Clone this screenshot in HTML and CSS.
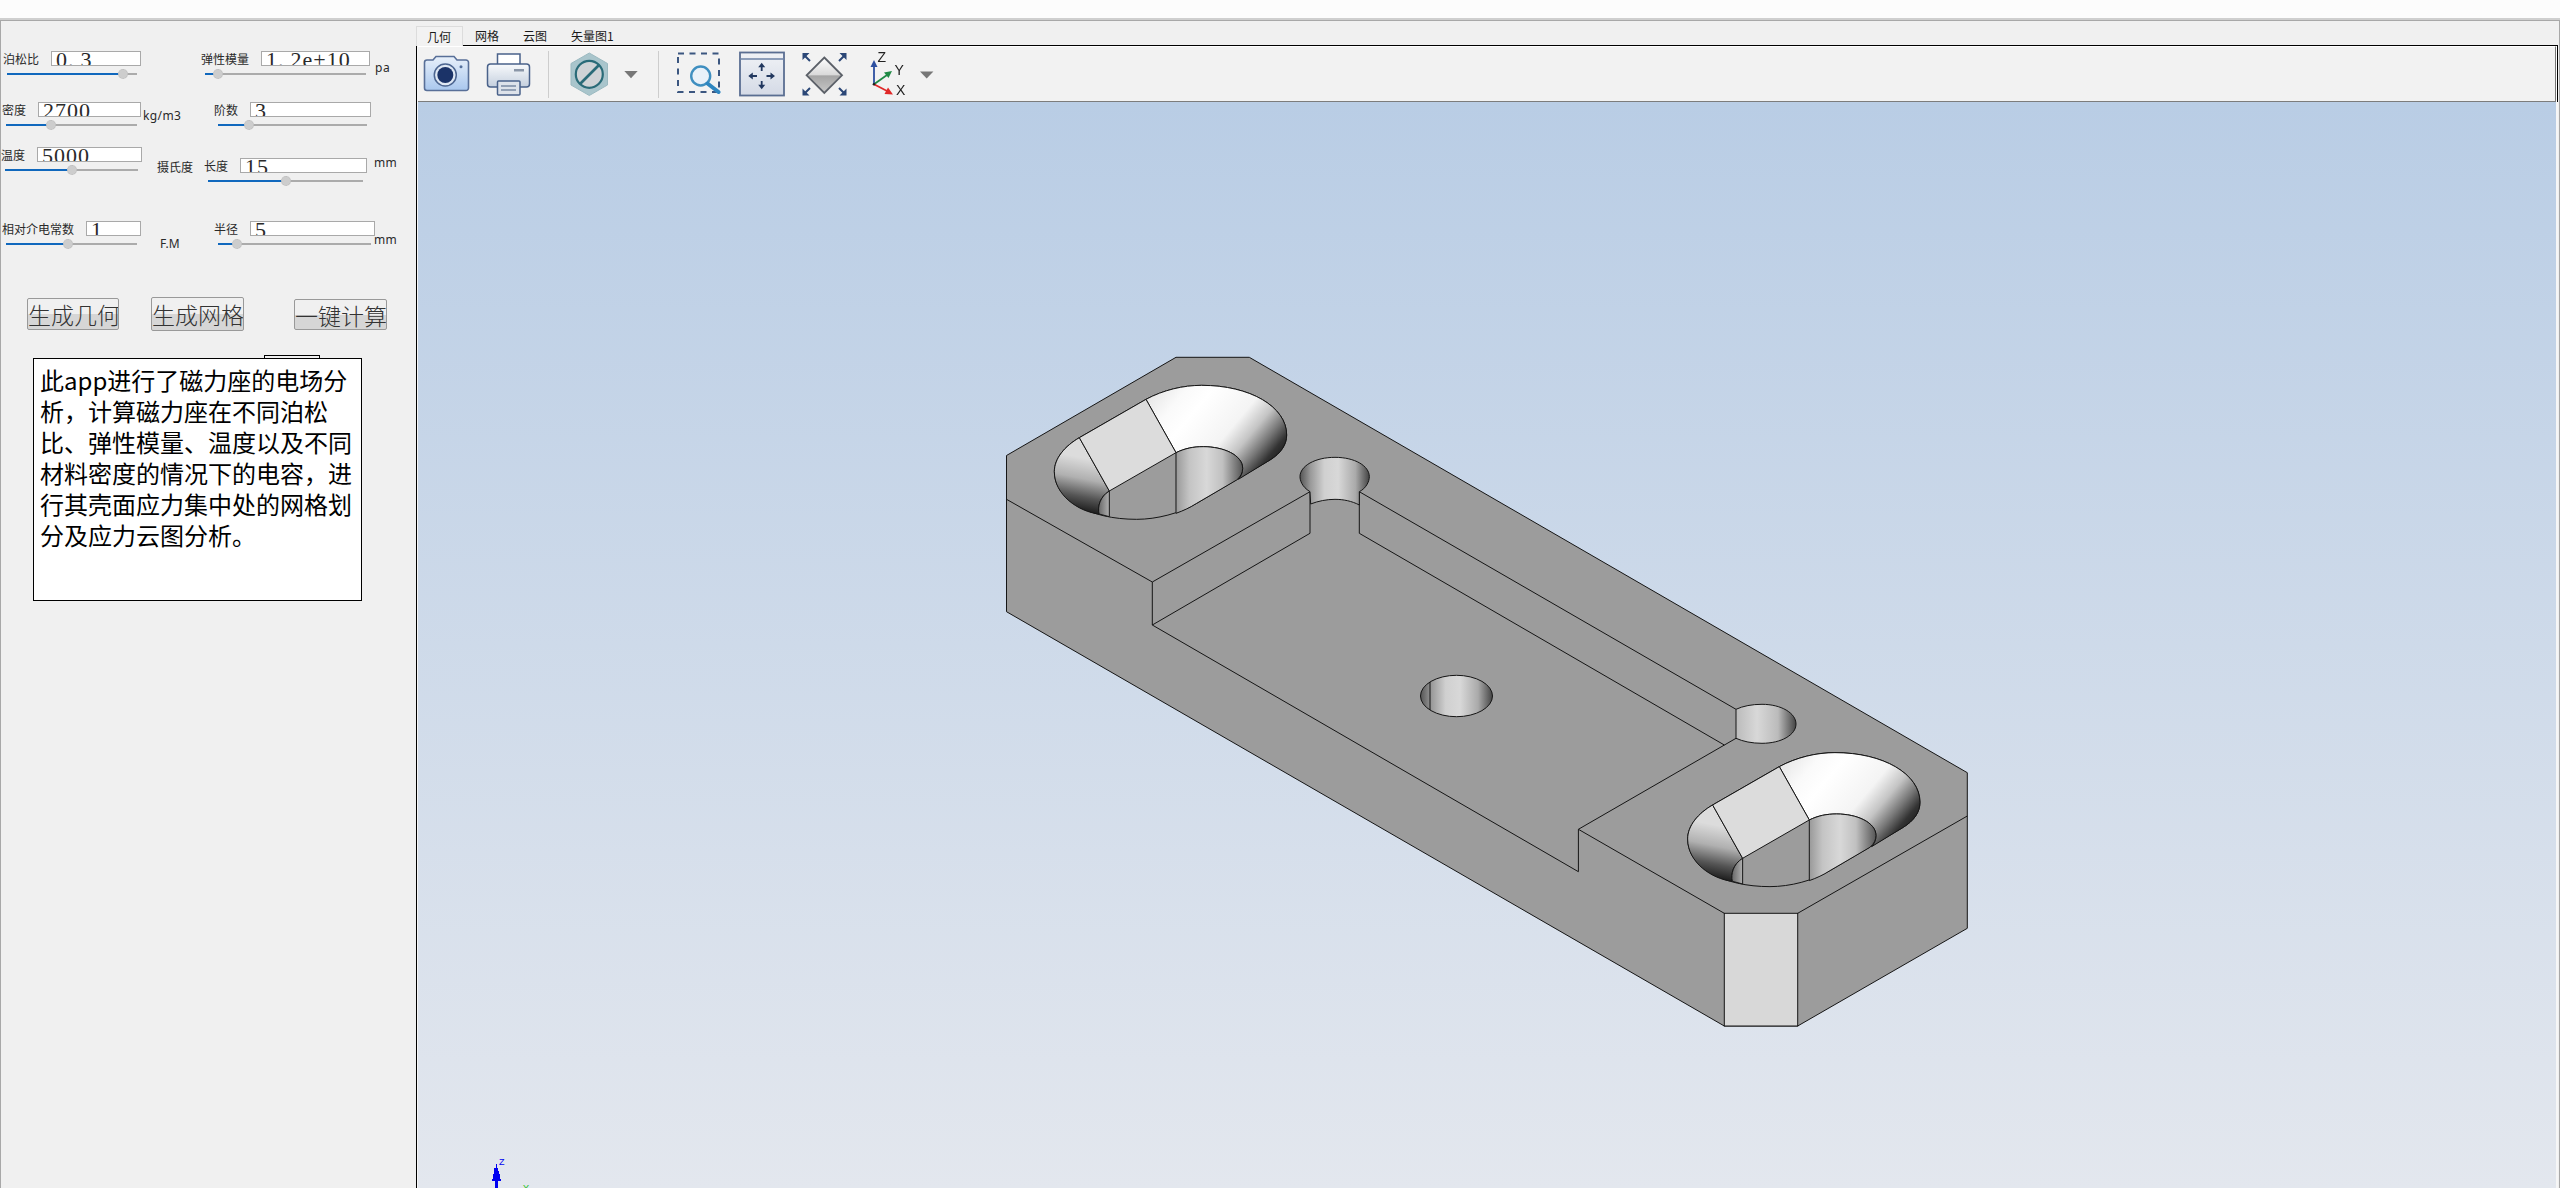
FILE: index.html
```html
<!DOCTYPE html>
<html lang="zh">
<head>
<meta charset="utf-8">
<title>磁力座电场分析</title>
<link rel="stylesheet" href="styles.css">
</head>
<body>
<header class="topbar"></header>
<main class="main">
  <aside class="panel">
    <section class="form">
      <div class="cell">
        <div class="field f1">
          <div class="top"><span class="lab">泊松比</span><span class="inp">0<span class="dot">.</span>3</span></div>
          <div class="slider"><i class="fill" style="width:89%"></i><b class="thumb" style="left:89%"></b></div>
        </div>
      </div>
      <div class="cell">
        <div class="field f2">
          <div class="top"><span class="lab">弹性模量</span><span class="inp">1<span class="dot">.</span>2e+10</span></div>
          <div class="slider"><i class="fill" style="width:8%"></i><b class="thumb" style="left:8%"></b></div>
        </div>
        <span class="unit u2">pa</span>
      </div>
      <div class="cell">
        <div class="field f3">
          <div class="top"><span class="lab">密度</span><span class="inp">2700</span></div>
          <div class="slider"><i class="fill" style="width:34.4%"></i><b class="thumb" style="left:34.4%"></b></div>
        </div>
        <span class="unit u3">kg/m3</span>
      </div>
      <div class="cell">
        <div class="field f4">
          <div class="top"><span class="lab">阶数</span><span class="inp">3</span></div>
          <div class="slider"><i class="fill" style="width:20.8%"></i><b class="thumb" style="left:20.8%"></b></div>
        </div>
      </div>
      <div class="cell">
        <div class="field f5">
          <div class="top"><span class="lab">温度</span><span class="inp">5000</span></div>
          <div class="slider"><i class="fill" style="width:50.4%"></i><b class="thumb" style="left:50.4%"></b></div>
        </div>
        <span class="unit u5">摄氏度</span>
      </div>
      <div class="cell">
        <div class="field f6">
          <div class="top"><span class="lab">长度</span><span class="inp">15</span></div>
          <div class="slider"><i class="fill" style="width:50.3%"></i><b class="thumb" style="left:50.3%"></b></div>
        </div>
        <span class="unit u6">mm</span>
      </div>
      <div class="cell">
        <div class="field f7">
          <div class="top"><span class="lab">相对介电常数</span><span class="inp">1</span></div>
          <div class="slider"><i class="fill" style="width:47.3%"></i><b class="thumb" style="left:47.3%"></b></div>
        </div>
        <span class="unit u7">F.M</span>
      </div>
      <div class="cell">
        <div class="field f8">
          <div class="top"><span class="lab">半径</span><span class="inp">5</span></div>
          <div class="slider"><i class="fill" style="width:12.4%"></i><b class="thumb" style="left:12.4%"></b></div>
        </div>
        <span class="unit u8">mm</span>
      </div>
    </section>
    <section class="actions">
      <button class="btn b1">生成几何</button>
      <button class="btn b2">生成网格</button>
      <button class="btn b3">一键计算</button>
    </section>
    <div class="note-tab"></div>
    <div class="note">此app进行了磁力座的电场分<br>析，计算磁力座在不同泊松<br>比、弹性模量、温度以及不同<br>材料密度的情况下的电容，进<br>行其壳面应力集中处的网格划<br>分及应力云图分析。</div>
  </aside>

  <section class="viewer">
    <nav class="tabs">
      <span class="tab active">几何</span>
      <span class="tab">网格</span>
      <span class="tab">云图</span>
      <span class="tab">矢量图1</span>
    </nav>
    <div class="stage">
      <div class="bar-wrap">
        <div class="toolbar">
          <svg class="icon i-cam" width="56" height="52" viewBox="420 48 56 52">
            <defs><linearGradient id="camG" x1="0" y1="0" x2="0" y2="1"><stop offset="0" stop-color="#e8f0fa"/><stop offset="1" stop-color="#a9c7ee"/></linearGradient></defs>
            <path d="M427 60h6l3-3.5h18l3 3.5h9a2.5 2.5 0 0 1 2.5 2.5v25.5a2.5 2.5 0 0 1-2.5 2.5h-39a2.5 2.5 0 0 1-2.5-2.5v-25.500a2.500 2.500 0 0 1 2.500-2.500z" fill="url(#camG)" stroke="#586f98" stroke-width="1.6"/>
            <circle cx="445.300" cy="75" r="11" fill="#dfe8f4" stroke="#4c6590" stroke-width="1.500"/>
            <circle cx="445.300" cy="75" r="8" fill="#1b3368"/>
            <circle cx="461" cy="66.700" r="1.500" fill="#55709c"/>
          </svg>
          <svg class="icon i-print" width="60" height="52" viewBox="476 48 60 52">
            <defs><linearGradient id="prG" x1="0" y1="0" x2="0" y2="1"><stop offset="0" stop-color="#f8fafc"/><stop offset="1" stop-color="#c4cfde"/></linearGradient></defs>
            <rect x="497.500" y="54" width="22.500" height="14" fill="#fff" stroke="#4a628a" stroke-width="1.500"/>
            <rect x="487.500" y="64" width="42" height="23" rx="3" fill="url(#prG)" stroke="#4a628a" stroke-width="1.500"/>
            <rect x="514" y="69" width="10" height="2.500" fill="#8a96a8"/>
            <rect x="497.500" y="81" width="22.500" height="14" rx="1" fill="#dde2ea" stroke="#4a628a" stroke-width="1.500"/>
            <path d="M501 86h15M501 90h15" stroke="#7a8aa4" stroke-width="1.400"/>
          </svg>
          <span class="sep s1"></span>
          <svg class="icon i-hex" width="50" height="52" viewBox="565 48 50 52">
            <polygon points="589.300,53 607.500,63.500 607.500,85 589.300,95.500 571,85 571,63.500" fill="#a9c5cc" stroke="#9bb9c0"/>
            <circle cx="589.300" cy="74.300" r="13.500" fill="#cfd3d6" stroke="#2a6b78" stroke-width="2.200"/>
            <path d="M580 84L599 65" stroke="#2a6b78" stroke-width="2.600"/>
          </svg>
          <svg class="icon" width="30" height="52" viewBox="615 48 30 52"><polygon points="624.300,71 637.700,71 631,78.300" fill="#777"/></svg>
          <span class="sep s2"></span>
          <svg class="icon i-zoom" width="60" height="52" viewBox="670 48 60 52">
            <rect x="678" y="53.500" width="41" height="38.500" fill="none" stroke="#3b5680" stroke-width="2" stroke-dasharray="6 5.500"/>
            <circle cx="700.700" cy="76" r="9.500" fill="#e9f1f9" stroke="#3f8fc0" stroke-width="2.400"/>
            <path d="M707.500 83.500L718.500 92" stroke="#2e86c0" stroke-width="4" stroke-linecap="round"/>
          </svg>
          <svg class="icon i-pan" width="60" height="52" viewBox="730 48 60 52">
            <defs><linearGradient id="panG" x1="0" y1="0" x2="0" y2="1"><stop offset="0" stop-color="#f0f2f6"/><stop offset="1" stop-color="#d4dae6"/></linearGradient></defs>
            <rect x="740" y="52.500" width="44" height="43" fill="url(#panG)" stroke="#5a6e92" stroke-width="1.800"/>
            <path d="M740 59h44" stroke="#6d82a6" stroke-width="1.600"/>
            <path d="M761.700 65v6M761.700 81v6M751 76h6M766.500 76h6" stroke="#22385f" stroke-width="1.800"/>
            <path d="M761.700 62.700l3.500 4.500h-7zM761.700 89.300l3.500-4.500h-7zM748.300 76l4.500-3.500v7zM775 76l-4.500-3.500v7z" fill="#22385f"/>
          </svg>
          <svg class="icon i-fit" width="70" height="52" viewBox="790 48 70 52">
            <defs>
              <linearGradient id="fitT" x1="0" y1="0" x2="0" y2="1"><stop offset="0" stop-color="#fff"/><stop offset="1" stop-color="#d8d8d8"/></linearGradient>
              <linearGradient id="fitB" x1="0" y1="0" x2="0" y2="1"><stop offset="0" stop-color="#a4a4a4"/><stop offset="1" stop-color="#c8c8c8"/></linearGradient>
            </defs>
            <polygon points="824.300,57.500 842,75.300 806.600,75.300" fill="url(#fitT)"/>
            <polygon points="806.600,75.300 842,75.300 824.300,93" fill="url(#fitB)"/>
            <polygon points="824.300,57.500 842,75.300 824.300,93 806.600,75.300" fill="none" stroke="#5b6068" stroke-width="1.800"/>
            <path d="M804 55l6 6M845 55l-6 6M804 94l6-6M845 94l-6-6" stroke="#2b4777" stroke-width="2"/>
            <path d="M802.500 53h7l-7 7zM846.500 53h-7l7 7zM802.500 95.500h7l-7-7zM846.500 95.500h-7l7-7z" fill="#2b4777"/>
          </svg>
          <svg class="icon i-axis" width="55" height="52" viewBox="860 48 55 52">
            <path d="M874 84.300V66" stroke="#2c4fa0" stroke-width="1.800"/>
            <polygon points="874,60 877.500,67 870.500,67" fill="#2c4fa0"/>
            <path d="M874 84.300L887 75" stroke="#1f8a45" stroke-width="1.800"/>
            <polygon points="892,71 888.500,78 884,72.500" fill="#1f8a45"/>
            <path d="M874 84.300L888 91.500" stroke="#e02828" stroke-width="1.800"/>
            <polygon points="893,94.500 884.500,94 888,87.500" fill="#e02828"/>
            <circle cx="874" cy="84.300" r="1.300" fill="#222"/>
            <text class="axis-t" x="877.500" y="62">Z</text>
            <text class="axis-t" x="894.500" y="74.500">Y</text>
            <text class="axis-t" x="896" y="94.500">X</text>
          </svg>
          <svg class="icon" width="25" height="52" viewBox="915 48 25 52"><polygon points="920,71.500 933.400,71.500 926.700,78.500" fill="#777"/></svg>
        </div>
      </div>
      <div class="canvas">
        <svg class="model" width="2138" height="1086" viewBox="418 102 2138 1086">
          <defs>
            <linearGradient id="coneR" gradientUnits="userSpaceOnUse" x1="470" y1="130" x2="830" y2="430">
              <stop offset="0" stop-color="#e0e0e0"/><stop offset=".22" stop-color="#fafafa"/><stop offset=".35" stop-color="#fff"/><stop offset=".6" stop-color="#f4f4f4"/><stop offset=".72" stop-color="#c4c4c4"/><stop offset=".82" stop-color="#777"/><stop offset=".9" stop-color="#333"/><stop offset="1" stop-color="#111"/>
            </linearGradient>
            <linearGradient id="coneL" gradientUnits="userSpaceOnUse" x1="310" y1="360" x2="280" y2="510">
              <stop offset="0" stop-color="#dcdcdc"/><stop offset=".4" stop-color="#b0b0b0"/><stop offset=".75" stop-color="#555"/><stop offset="1" stop-color="#222"/>
            </linearGradient>
            <linearGradient id="cylR" gradientUnits="userSpaceOnUse" x1="558" y1="0" x2="758" y2="0">
              <stop offset="0" stop-color="#999"/><stop offset=".2" stop-color="#c4c4c4"/><stop offset=".46" stop-color="#d8d8d8"/><stop offset=".7" stop-color="#c0c0c0"/><stop offset="1" stop-color="#555"/>
            </linearGradient>
            <linearGradient id="cylL" gradientUnits="userSpaceOnUse" x1="325" y1="0" x2="358" y2="0">
              <stop offset="0" stop-color="#666"/><stop offset="1" stop-color="#b0b0b0"/>
            </linearGradient>
            <linearGradient id="hole">
              <stop offset="0" stop-color="#555"/><stop offset=".15" stop-color="#999"/><stop offset=".35" stop-color="#d0d0d0"/><stop offset=".55" stop-color="#d8d8d8"/><stop offset=".8" stop-color="#aaa"/><stop offset="1" stop-color="#444"/>
            </linearGradient>
            <linearGradient id="hole2">
              <stop offset="0" stop-color="#bbb"/><stop offset=".35" stop-color="#d8d8d8"/><stop offset=".7" stop-color="#bbb"/><stop offset="1" stop-color="#444"/>
            </linearGradient>
          </defs>
          <polygon class="solid" points="1006.500,455.500 1176,357.300 1249.300,357.300 1967.300,772.700 1967.300,928.300 1797.700,1026 1724.300,1026 1006.500,611.700"/>
          <rect class="ln" fill="#d8d8d8" x="1724.300" y="913.300" width="73.400" height="112.700"/>
          <path class="ln" fill="none" d="M1006.500 499.300L1152.300 582L1310 491.700V533.300L1152.300 625V582M1152.300 625L1578.400 871.700V829.300L1736 738.300M1578.400 829.300L1724.300 913.300M1359.300 491.700L1736 709.300M1359.300 491.700V533.300L1724.300 745M1967.300 816L1797.700 913.300"/>
          <g id="slot" class="zc" transform="translate(990 340) scale(.33333)">
            <path d="M268 293L468 178C520 150 580 136 635 136C780 136 890 200 890 285C890 315 872 340 840 360L620 490C570 520 500 538 440 538C300 538 193 480 193 395C193 355 225 318 268 293Z" fill="#9c9c9c"/>
            <path d="M468 178C520 150 580 136 635 136C780 136 890 200 890 285C890 315 872 340 840 360L745 418C754 408 758 398 758 385C758 345 700 320 640 320C610 320 585 325 558 338Z" fill="url(#coneR)"/>
            <path d="M268 293C225 318 193 355 193 395C193 465 265 515 327 522C322 500 330 470 358 453Z" fill="url(#coneL)"/>
            <path d="M268 293L468 178L558 338L358 453Z" fill="#dcdcdc"/>
            <path d="M558 338C585 325 610 320 640 320C700 320 758 345 758 385C758 398 752 410 740 420L620 490C600 503 580 512 558 520Z" fill="url(#cylR)"/>
            <path d="M358 453C330 470 322 500 327 522L358 530Z" fill="url(#cylL)"/>
          </g>
          <use href="#slot" transform="translate(633.300 367.300)"/>
          <g class="zc" transform="translate(990 340) scale(.33333)">
            <path d="M960 455C935 440 930 420 930 410C930 378 975 352 1035 352C1095 352 1138 378 1138 410C1138 425 1128 445 1108 455V495C1085 483 1060 478 1035 478C1010 478 985 483 962 492Z" fill="url(#hole)"/>
          </g>
          <ellipse class="ln" cx="1456.500" cy="696" rx="36" ry="20.700" fill="url(#hole)"/>
          <path class="ln" fill="none" d="M1430 682V710"/>
          <path class="ln" d="M1736 709.300C1743 706 1752 704.300 1762 704.300C1781 704.300 1796 713 1796 724C1796 735 1781 743.300 1762 743.300C1752 743.300 1743 741.500 1736 738.300Z" fill="url(#hole2)"/>
          <polygon class="triad-z" points="495.500,1164 497,1164 497,1168 498,1168 498,1171 499,1171 499,1174 500,1174 500,1179 501,1179 501,1181 498,1181 498,1188 495,1188 495,1181 492,1181 492,1179 493,1179 493,1174 494,1174 494,1168 495.500,1168"/>
          <text class="triad-t tz" x="499" y="1165">Z</text>
          <text class="triad-t ty" x="523" y="1191">Y</text>
        </svg>
      </div>
    </div>
  </section>
</main>
</body>
</html>
```
FILE: styles.css
```css
* { box-sizing: border-box; }
html, body { margin: 0; height: 1188px; overflow: hidden; }
body {
  background: #f0f0f0;
  font-family: "Noto Sans CJK SC", "Noto Sans", sans-serif;
  color: #222;
}
.topbar {
  height: 20px;
  background: #fcfcfc;
  border-bottom: 2px solid #cfcfcf;
}
.main {
  display: flex;
  height: 1168px;
  border: 1px solid #a8a8a8;
  border-width: 1px 1px 0 1px;
  background: #f0f0f0;
}

/* left form */
.panel { width: 415px; flex: none; }
.form {
  display: grid;
  grid-template-columns: 200px 1fr;
  grid-template-rows: 51px 45px 74px 76px;
  padding-top: 30px;
  height: 276px;
}
.cell { display: flex; align-self: start; }
.field { flex: none; }
.top { display: flex; gap: 12px; height: 15px; align-items: center; }
.lab { font-size: 12px; line-height: 15px; white-space: nowrap; color: #2a2a2a; }
.inp {
  flex: 1;
  height: 15px;
  background: #fff;
  border: 1px solid #a9a9a9;
  overflow: hidden;
  padding-left: 4px;
  font-family: "Liberation Serif", serif;
  font-size: 22px;
  line-height: 16px;
  letter-spacing: 1px;
  color: #2a2a2a;
  white-space: nowrap;
}
.dot { margin-right: 6px; }
.slider {
  position: relative;
  height: 2px;
  margin: 7px 4px 0;
  background: #ababab;
}
.fill { display: block; height: 2px; background: #1068bd; }
.thumb {
  position: absolute;
  top: -4px;
  width: 10px;
  height: 10px;
  margin-left: -5px;
  border-radius: 50%;
  background: #cdcdcd;
  border: 1px dotted #bbb;
}
.f1 { width: 138px; margin-left: 2px; }
.f2 { width: 169px; }
.f3 { width: 139px; margin-left: 1px; }
.f4 { width: 157px; margin-left: 13px; }
.f5 { width: 141px; }
.f6 { width: 163px; margin: 11px 0 0 3px; }
.f7 { width: 139px; margin-left: 1px; }
.f8 { width: 161px; margin-left: 13px; }
.unit {
  font-family: "Noto Sans", sans-serif;
  font-size: 12px;
  line-height: 14px;
  white-space: nowrap;
  color: #2a2a2a;
}
.u2 { margin: 10px 0 0 5px; letter-spacing: .5px; }
.u3 { margin: 7px 0 0 2px; letter-spacing: .4px; }
.u5 { margin: 13px 0 0 15px; font-family: "Noto Sans CJK SC", sans-serif; }
.u6 { margin: 9px 0 0 7px; letter-spacing: .4px; }
.u7 { margin: 16px 0 0 19px; }
.u8 { margin: 12px 0 0 -1px; letter-spacing: .4px; }

/* buttons */
.actions { display: flex; align-items: flex-start; height: 58px; }
.btn {
  display: block;
  padding: 0;
  overflow: hidden;
  white-space: nowrap;
  font-family: "Noto Sans CJK SC", sans-serif;
  font-weight: 300;
  font-size: 23px;
  line-height: 28px;
  color: #333;
  border: 1px solid #999;
  border-radius: 2px;
  background: linear-gradient(#f0f0f0 0 50%, #d6d6d6 50% 100%);
}
.b1 { width: 92px; height: 32px; margin: 1px 0 0 26px; }
.b2 { width: 93px; height: 34px; margin-left: 32px; }
.b3 { width: 93px; height: 31px; margin: 2px 0 0 50px; }

/* note */
.note-tab {
  width: 56px;
  height: 3px;
  margin-left: 263px;
  border: 1px solid #000;
  border-bottom: 0;
}
.note {
  width: 329px;
  height: 243px;
  margin-left: 32px;
  padding: 5px 0 0 6px;
  background: #fff;
  border: 1px solid #000;
  font-size: 24px;
  line-height: 31px;
  color: #000;
  white-space: nowrap;
}

/* viewer */
.viewer { flex: 1; display: flex; flex-direction: column; min-width: 0; }
.tabs { display: flex; align-items: flex-end; height: 24px; flex: none; }
.tab {
  padding: 0 12px;
  height: 19px;
  font-size: 12px;
  line-height: 20px;
  color: #1a1a1a;
  white-space: nowrap;
}
.tab.active {
  position: relative;
  z-index: 1;
  width: 47px;
  height: 20px;
  margin-bottom: -1px;
  padding: 0 0 0 10px;
  background: #f2f2f2;
  border: 1px solid #dcdcdc;
  border-bottom: 0;
}
.stage {
  flex: 1;
  min-height: 0;
  display: flex;
  flex-direction: column;
  border-top: 1px solid #000;
  border-left: 1px solid #000;
  padding-left: 1px;
  margin-right: 1px;
  background: #f6f6f6;
}
.bar-wrap {
  flex: none;
  border-right: 1px solid #000;
  padding-right: 1px;
  background: #fff;
}
.toolbar {
  display: flex;
  align-items: center;
  height: 56px;
  padding-left: 2px;
  background: #f2f2f2;
  border-top: 1px solid #fff;
  border-right: 1px solid #777;
  border-bottom: 1px solid #7c7c7c;
}
.icon { display: block; flex: none; filter: blur(.35px); }
.sep { flex: none; width: 1px; height: 47px; background: #cdcdcd; }
.s1 { margin: 0 16px 0 12px; }
.s2 { margin: 0 11px 0 13px; }
.axis-t { font-family: "Liberation Sans", sans-serif; font-size: 14px; fill: #222; }
.canvas {
  flex: 1;
  min-height: 0;
  margin-right: 2px;
  overflow: hidden;
  background: linear-gradient(#b9cde5, #e3e7ee);
}
.model { display: block; }
.solid { fill: #9c9c9c; stroke: #151515; stroke-width: 1; }
.ln { stroke: #151515; stroke-width: 1; }
.zc path { stroke: #151515; stroke-width: 3; }
.triad-z { fill: #0000f0; shape-rendering: crispEdges; }
.triad-t { font-family: "Liberation Sans", sans-serif; font-size: 9px; }
.tz { fill: #0000f0; }
.ty { fill: #22c022; }
```
